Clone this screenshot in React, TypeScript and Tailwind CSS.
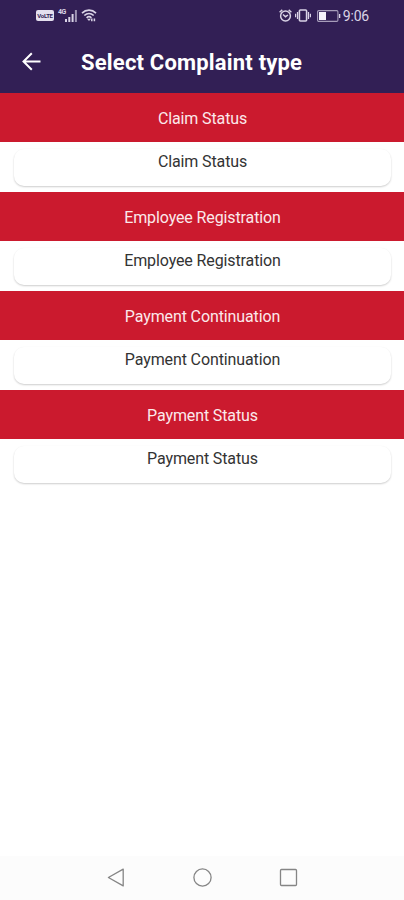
const complaintTypes = [
  'Claim Status',
  'Employee Registration',
  'Payment Continuation',
  'Payment Status',
];

function StatusBar() {
  return (
    <div className="flex h-[31px] items-center justify-between pl-9 pr-[35px] text-[#d9d3e6]">
      <div className="flex items-center">
        <div className="flex h-[11px] w-[18px] items-center justify-center rounded-[2px] bg-[#e4dfee] text-[6px] font-bold tracking-[-0.3px] text-[#321f55]">
          VoLTE
        </div>
        <span className="mb-[7px] ml-1 w-[8px] text-[7px] font-bold leading-[6px] tracking-[-0.5px]">4G</span>
        <svg className="-ml-px h-3 w-3" viewBox="0 0 12 12" fill="currentColor">
          <path d="M0 9h2v3H0zM3.3 7h2v5h-2zM6.6 4h2v8h-2z" />
          <path d="M9.9 0h2v12h-2z" opacity="0.65" />
        </svg>
        <svg className="ml-1 h-[13px] w-4" viewBox="0 0 16 13" fill="none" stroke="currentColor" strokeWidth="1.7">
          <path d="M1 4.1C5 .2 11 .2 15 4.1M3.3 6.5c2.8-2.6 6.6-2.6 9.4 0M5.6 8.8c1.4-1.3 3.4-1.3 4.8 0" />
          <path d="M6 9.8h4L8 12z" fill="currentColor" stroke="none" />
          <path d="M10.8 12.2V9.4M13.4 9.4v2.8" strokeWidth="1.5" />
        </svg>
      </div>
      <div className="flex items-center">
        <svg className="h-[13px] w-[13px]" viewBox="0 0 13 13" fill="none" stroke="currentColor" strokeWidth="1.5">
          <circle cx="6.5" cy="7" r="4.9" />
          <path d="M.6 3.2 3.3.9M12.4 3.2 9.7.9M4 5.5l2.5 2.2L9 6" />
        </svg>
        <svg className="ml-[3px] h-[13px] w-4" viewBox="0 0 16 13" fill="none" stroke="currentColor" strokeWidth="1.6">
          <rect x="4.4" y="1" width="7.2" height="11" rx="1" />
          <path d="M2.5 3v7M13.5 3v7M.6 4.8v3.4M15.4 4.8v3.4" strokeWidth="1.2" />
        </svg>
        <svg className="ml-[6px] h-3 w-6" viewBox="0 0 24 12" fill="none">
          <rect x=".6" y=".6" width="20.3" height="10.8" rx="1.2" stroke="currentColor" strokeWidth="1.1" opacity="0.7" />
          <path d="M2 2h7v8H2z" fill="#f5f2fa" />
          <path d="M22.6 4v4" stroke="currentColor" strokeWidth="1.4" />
        </svg>
        <span className="ml-[2px] text-[14px] leading-4 tracking-[-0.2px]">9:06</span>
      </div>
    </div>
  );
}

function Header() {
  return (
    <header className="h-[93px] bg-[#321f55]">
      <StatusBar />
      <div className="flex h-[62px] items-center pl-[22px]">
        <svg className="mb-px h-5 w-[19px]" viewBox="0 0 19 20" fill="none" stroke="#fff" strokeWidth="2">
          <path d="M18.5 9.5H1.5M9.8 1.2 1.5 9.5l8.3 8.3" />
        </svg>
        <h1 className="ml-10 mt-[2px] whitespace-nowrap text-[22px] font-bold leading-[26px] tracking-[0.19px] text-white">
          Select Complaint type
        </h1>
      </div>
    </header>
  );
}

function ComplaintSection({ title }: { title: string }) {
  return (
    <section className="h-[99px]">
      <h2 className="flex h-[49px] items-center justify-center bg-[#cb1a2e] pl-px pt-[2px] text-[16px] tracking-[-0.12px] text-[#fbe9eb]">
        {title}
      </h2>
      <div className="h-[50px] overflow-hidden pl-[14px] pr-[13px] pt-[7px]">
        <button className="block h-[37px] w-full rounded-[10px] bg-white pb-[11px] text-[16px] tracking-[-0.12px] text-[#333] shadow-[0_1px_2px_rgba(0,0,0,0.2)]">
          {title}
        </button>
      </div>
    </section>
  );
}

function NavigationBar() {
  return (
    <nav className="flex h-11 items-center justify-center gap-[66px] bg-[#fcfcfc] text-[#858585]">
      <svg className="h-5 w-5" viewBox="0 0 20 20" fill="none" stroke="currentColor" strokeWidth="1.3">
        <path d="M17.2 1.1v16.8L2.4 9.5z" strokeLinejoin="round" />
      </svg>
      <svg className="h-5 w-5" viewBox="0 0 20 20" fill="none" stroke="currentColor" strokeWidth="1.3">
        <circle cx="10.5" cy="9.5" r="8.6" />
      </svg>
      <svg className="h-5 w-5" viewBox="0 0 20 20" fill="none" stroke="currentColor" strokeWidth="1.3">
        <rect x="2.5" y="1.5" width="16" height="16" rx="1" />
      </svg>
    </nav>
  );
}

export default function App() {
  return (
    <div className="flex h-[900px] w-[404px] flex-col bg-white font-[Roboto,sans-serif]">
      <Header />
      <main className="flex-1">
        {complaintTypes.map((title) => (
          <ComplaintSection key={title} title={title} />
        ))}
      </main>
      <NavigationBar />
    </div>
  );
}
